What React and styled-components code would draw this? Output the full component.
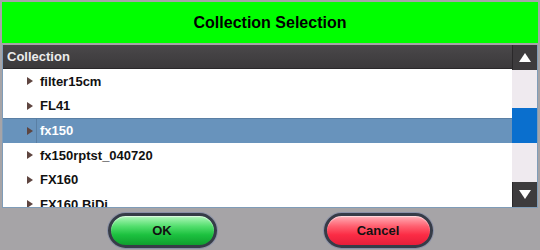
import React from "react";
import styled, { createGlobalStyle } from "styled-components";

const Global = createGlobalStyle`
  html, body { margin: 0; padding: 0; }
  body { font-family: "Liberation Sans", Arial, sans-serif; }
`;

const Frame = styled.div`
  width: 540px;
  height: 250px;
  box-sizing: border-box;
  background: #a6a4a7;
  padding: 2px 2px 0 2px;
  display: flex;
  flex-direction: column;
`;

const TitleBar = styled.div`
  height: 41px;
  background: #00ff00;
  display: flex;
  align-items: center;
  justify-content: center;
  font-size: 16px;
  font-weight: bold;
  color: #000;
`;

const ListBox = styled.div`
  margin-top: 2px;
  height: 162px;
  display: flex;
  border: 1px solid #7f9cb8;
  border-top: none;
  background: #fff;
`;

const ListBody = styled.div`
  flex: 1;
  display: flex;
  flex-direction: column;
  overflow: hidden;
`;

const HeaderRow = styled.div`
  height: 24px;
  flex: none;
  background: linear-gradient(#4a484a, #3b393b);
  border-bottom: 1px solid #2a282a;
  box-sizing: border-box;
  color: #ececec;
  font-size: 13px;
  font-weight: bold;
  display: flex;
  align-items: center;
  padding-left: 4px;
`;

const Row = styled.div`
  height: 24.6px;
  flex: none;
  display: flex;
  align-items: center;
  font-size: 13px;
  font-weight: bold;
  color: ${({ $selected }) => ($selected ? "#fff" : "#111")};
  background: ${({ $selected }) => ($selected ? "#6893bc" : "transparent")};
  border-top: ${({ $selected }) => ($selected ? "1px solid #5a7fa4" : "none")};
  box-sizing: border-box;
`;

const Arrow = styled.span`
  width: 0;
  height: 0;
  margin-left: 24px;
  border-top: 4.5px solid transparent;
  border-bottom: 4.5px solid transparent;
  border-left: 6px solid #5e4540;
`;

const Label = styled.span`
  margin-left: 3px;
  padding-left: 3px;
  height: 100%;
  display: flex;
  align-items: center;
  border-left: 1px solid ${({ $selected }) => ($selected ? "#5a7fa4" : "transparent")};
`;

const ScrollBar = styled.div`
  width: 25px;
  display: flex;
  flex-direction: column;
  background: #efeaef;
`;

const ScrollButton = styled.div`
  height: 25px;
  flex: none;
  background: #3d3b3d;
  border-left: 1px solid #2a282a;
  box-sizing: border-box;
  display: flex;
  align-items: center;
  justify-content: center;
`;

const Track = styled.div`
  flex: 1;
  display: flex;
  flex-direction: column;
  padding-top: 38px;
`;

const Thumb = styled.div`
  height: 35px;
  background: #0a6fce;
`;

const Tri = styled.span`
  width: 0;
  height: 0;
  border-left: 6px solid transparent;
  border-right: 6px solid transparent;
  ${({ $up }) =>
    $up ? "border-bottom: 9px solid #fff;" : "border-top: 9px solid #fff;"}
`;

const ButtonBar = styled.div`
  flex: 1;
  display: flex;
  justify-content: center;
  align-items: center;
  gap: 107px;
  padding-top: 2px;
`;

const Pill = styled.button`
  width: 109px;
  height: 35px;
  border-radius: 18px;
  border: 3px solid #363c48;
  box-shadow: 0 0 0 1px #8a90a8, inset 0 1px 1px rgba(255,255,255,0.6);
  font-family: "Liberation Sans", Arial, sans-serif;
  font-size: 13px;
  font-weight: bold;
  color: #111;
  padding: 0;
  background: ${({ $variant }) =>
    $variant === "ok"
      ? "linear-gradient(#b2f7bd 0%, #54df6e 35%, #1cc13f 65%, #0f9e2e 100%)"
      : "linear-gradient(#ffb0b8 0%, #ff6070 35%, #fb2c45 65%, #e61e3a 100%)"};
`;

const items = ["filter15cm", "FL41", "fx150", "fx150rptst_040720", "FX160", "FX160 BiDi"];

export default function App() {
  return (
    <>
      <Global />
      <Frame>
        <TitleBar>Collection Selection</TitleBar>
        <ListBox>
          <ListBody>
            <HeaderRow>Collection</HeaderRow>
            {items.map((it) => (
              <Row key={it} $selected={it === "fx150"}>
                <Arrow />
                <Label $selected={it === "fx150"}>{it}</Label>
              </Row>
            ))}
          </ListBody>
          <ScrollBar>
            <ScrollButton><Tri $up /></ScrollButton>
            <Track><Thumb /></Track>
            <ScrollButton><Tri /></ScrollButton>
          </ScrollBar>
        </ListBox>
        <ButtonBar>
          <Pill $variant="ok">OK</Pill>
          <Pill $variant="cancel">Cancel</Pill>
        </ButtonBar>
      </Frame>
    </>
  );
}
